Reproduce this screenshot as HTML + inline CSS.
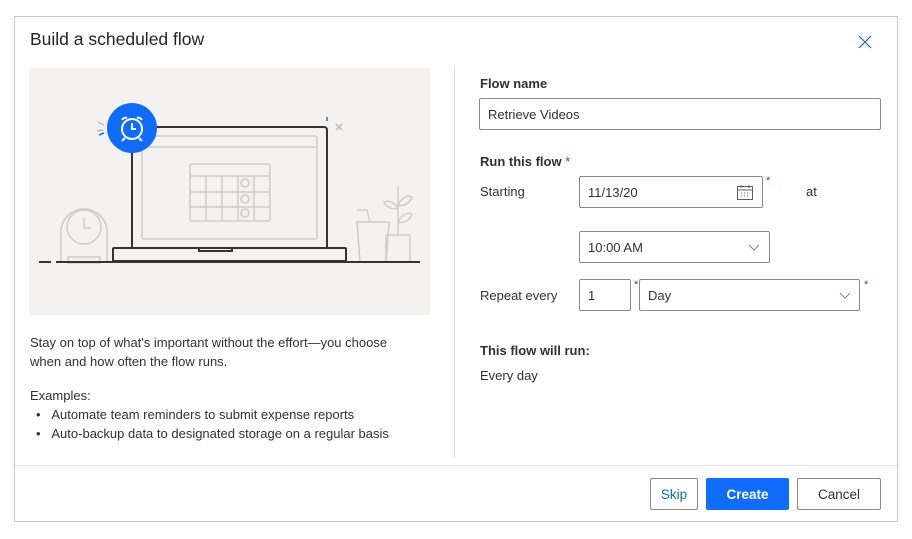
<!DOCTYPE html>
<html><head><style>
*{box-sizing:border-box;margin:0;padding:0}
body{width:912px;height:539px;background:#fff;font-family:"Liberation Sans",sans-serif;color:#323130;position:relative;overflow:hidden}
.a{position:absolute}
.dlg{left:14px;top:16px;width:884px;height:506px;border:1px solid #c8c8c8}
.t{font-size:13px}
.inp{position:absolute;border:1px solid #8a8886;border-radius:2px;background:#fff;font-size:13px;padding-left:8px;display:flex;align-items:center}
.star{position:absolute;color:#a4262c;font-size:11px}
.btn{position:absolute;top:478px;height:32px;border-radius:2px;font-size:13.5px;font-weight:bold;display:flex;align-items:center;justify-content:center}
</style></head><body>
<div class="a dlg"></div>
<div class="a" style="left:30px;top:29px;font-size:17.5px;color:#252423">Build a scheduled flow</div>
<svg class="a" style="left:858px;top:35px" width="14" height="14"><path d="M1 1L13 13M13 1L1 13" stroke="#0f6cbd" stroke-width="1.2"/></svg>
<svg class="a" style="left:29px;top:68px" width="401" height="247" viewBox="29 68 401 247">
<rect x="29" y="68" width="401" height="247" fill="#f3f2f1"/>
<g fill="none" stroke="#ccc" stroke-width="1.5">
<path d="M61 262V232a23 23 0 0 1 46 0V262"/><circle cx="84" cy="227" r="17"/><path d="M84 218v10h7"/><rect x="68" y="257" width="32" height="6"/>
<path d="M357 222h32l-3 40h-26zM370 222l-3-12h-10"/><rect x="386" y="235" width="24" height="27"/><path d="M398 235V186"/><path d="M398 205c4-8 10-10 14-8-2 6-8 10-14 8zM398 222c4-8 10-10 14-8-2 6-8 10-14 8zM398 208c-4-6-10-8-14-6 2 5 8 8 14 6z"/>
<rect x="142" y="136" width="175" height="103" rx="2"/><path d="M142 147h175"/>
<rect x="190" y="164" width="80" height="57" rx="2"/><path d="M190 176h80M190 192h80M190 207h80M206 176v45M222 176v45M238 176v45M254 176v45"/>
<circle cx="245" cy="183" r="4"/><circle cx="245" cy="199" r="4"/><circle cx="245" cy="213" r="4"/>
<path d="M336 124l6 6M342 124l-6 6" stroke="#bbb"/>
<path d="M98 122l6 3M97 131l6-1" stroke="#bbb"/>
</g>
<g fill="none" stroke="#333" stroke-width="2">
<path d="M132 248V130a3 3 0 0 1 3-3h189a3 3 0 0 1 3 3v118"/>
<rect x="113" y="248" width="233" height="13" rx="1"/><path d="M199 248v3h33v-3"/>
<path d="M56 262h364M39 262h12"/>
</g>
<path d="M99 135l5-2" stroke="#0f6cfd" stroke-width="1.5"/><path d="M327 117v4" stroke="#0f6cfd" stroke-width="1.5"/>
<circle cx="132" cy="128" r="25" fill="#0f6cfd"/>
<g fill="none" stroke="#fff" stroke-width="2"><circle cx="132" cy="129" r="10"/><path d="M132 123v6h4M122 120a4 4 0 0 1 5-2M142 120a4 4 0 0 0-5-2M125 138l-3 3M139 138l3 3"/></g>
</svg>
<div class="a t" style="left:30px;top:333px;line-height:19px;width:420px">Stay on top of what's important without the effort—you choose<br>when and how often the flow runs.</div>
<div class="a t" style="left:30px;top:386px;line-height:19px">Examples:</div>
<div class="a t" style="left:36px;top:405px;line-height:19px">•&nbsp;&nbsp;&nbsp;Automate team reminders to submit expense reports<br>•&nbsp;&nbsp;&nbsp;Auto-backup data to designated storage on a regular basis</div>
<div class="a" style="left:454px;top:68px;width:1px;height:390px;background:#e1dfdd"></div>
<div class="a" style="left:15px;top:465px;width:882px;height:1px;background:#e1dfdd"></div>
<div class="a t" style="left:480px;top:76px;font-weight:bold">Flow name</div>
<div class="inp" style="left:479px;top:98px;width:402px;height:32px">Retrieve Videos</div>
<div class="a t" style="left:480px;top:154px;font-weight:bold">Run this flow <span style="color:#a4262c;font-weight:normal">*</span></div>
<div class="a t" style="left:480px;top:184px">Starting</div>
<div class="inp" style="left:579px;top:176px;width:184px;height:32px">11/13/20
<svg class="a" style="left:157px;top:8px" width="16" height="15"><rect x="0.5" y="1.5" width="15" height="13" fill="none" stroke="#605e5c"/><path d="M0 5h16M4 0v3M12 0v3" stroke="#605e5c"/><path d="M4 8h1M7 8h1M10 8h1M4 11h1M7 11h1M10 11h1" stroke="#605e5c"/></svg></div>
<div class="star" style="left:766px;top:175px">*</div>
<div class="a t" style="left:806px;top:184px">at</div>
<div class="inp" style="left:579px;top:231px;width:191px;height:32px">10:00 AM
<svg class="a" style="left:168px;top:12px" width="12" height="7"><path d="M1 1l5 5 5-5" fill="none" stroke="#8a8886"/></svg></div>
<div class="a t" style="left:480px;top:288px">Repeat every</div>
<div class="inp" style="left:579px;top:279px;width:52px;height:32px">1</div>
<div class="star" style="left:634px;top:279px">*</div>
<div class="inp" style="left:639px;top:279px;width:221px;height:32px">Day
<svg class="a" style="left:199px;top:12px" width="12" height="7"><path d="M1 1l5 5 5-5" fill="none" stroke="#8a8886"/></svg></div>
<div class="star" style="left:864px;top:279px">*</div>
<div class="a t" style="left:480px;top:343px;font-weight:bold">This flow will run:</div>
<div class="a t" style="left:480px;top:368px">Every day</div>
<div class="btn" style="left:650px;width:48px;border:1px solid #8a8886;color:#0f6cbd;font-weight:normal">Skip</div>
<div class="btn" style="left:706px;width:83px;background:#0f6cfd;color:#fff">Create</div>
<div class="btn" style="left:797px;width:84px;border:1px solid #8a8886;color:#323130;font-weight:normal">Cancel</div>
</body></html>
